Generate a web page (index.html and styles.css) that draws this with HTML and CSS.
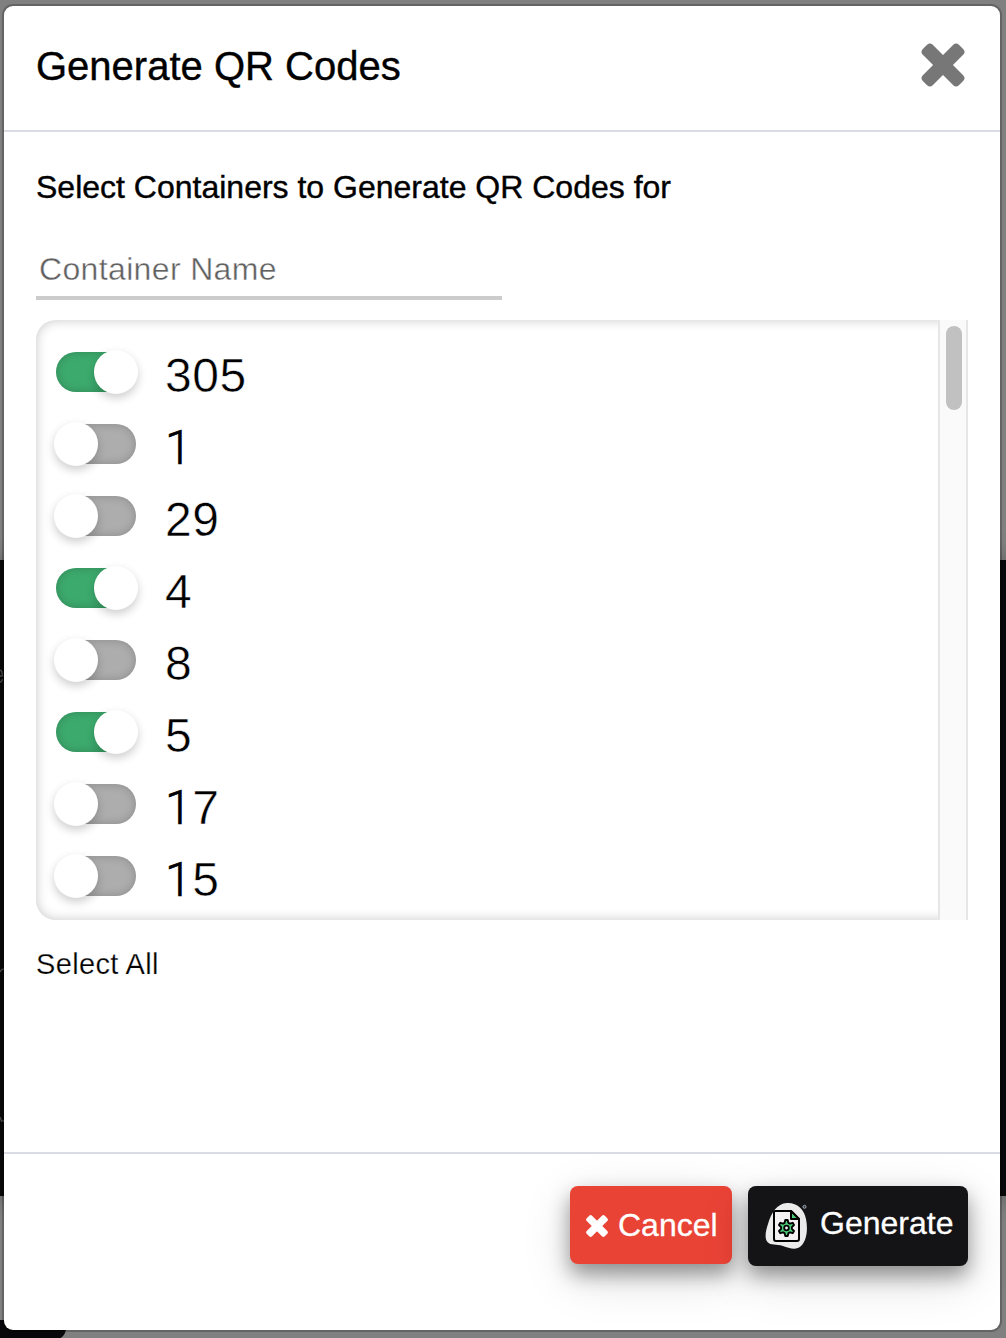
FILE: index.html
```
<!DOCTYPE html>
<html lang="en">
<head>
<meta charset="utf-8">
<title>Generate QR Codes</title>
<link rel="stylesheet" href="styles.css">
</head>
<body>
<div class="backdrop" aria-hidden="true">
  <div class="card">
    <svg class="frags" viewBox="0 0 4 636"><path d="M0 110Q2.500 111 2.500 116H0M0 122Q2 122 2.500 119M0 412Q1 409 4 409M0 557 1.500 561H4" fill="none" stroke="#444" stroke-width="1.500"/></svg>
  </div>
  <div class="tab"></div>
</div>
<main class="modal">
  <header class="modal-header">
    <h1>Generate QR Codes</h1>
    <svg class="close" viewBox="0 0 44 44"><g transform="rotate(45 22 22)"><rect x="-3.500" y="15" width="51" height="14" rx="4"/><rect x="15" y="-3.500" width="14" height="51" rx="4"/></g></svg>
  </header>
  <section class="modal-body">
    <h2>Select Containers to Generate QR Codes for</h2>
    <input class="search" type="text" placeholder="Container Name">
    <div class="list">
      <div class="rows">
        <label class="row"><span class="switch on"></span><span class="num">305</span></label>
        <label class="row"><span class="switch"></span><span class="num"><span class="one">1</span></span></label>
        <label class="row"><span class="switch"></span><span class="num">29</span></label>
        <label class="row"><span class="switch on"></span><span class="num">4</span></label>
        <label class="row"><span class="switch"></span><span class="num">8</span></label>
        <label class="row"><span class="switch on"></span><span class="num">5</span></label>
        <label class="row"><span class="switch"></span><span class="num"><span class="one">1</span>7</span></label>
        <label class="row"><span class="switch"></span><span class="num"><span class="one">1</span>5</span></label>
      </div>
      <div class="scrollbar"><div class="thumb"></div></div>
    </div>
    <div class="select-all">Select All</div>
  </section>
  <footer class="modal-footer">
    <button class="btn cancel"><svg class="x" viewBox="0 0 44 44"><g transform="rotate(45 22 22)"><rect x="-3.500" y="14.500" width="51" height="15" rx="4"/><rect x="14.500" y="-3.500" width="15" height="51" rx="4"/></g></svg><span>Cancel</span></button>
    <button class="btn generate">
      <svg class="doc" viewBox="0 0 44 48">
        <path d="M22 1C32 .5 39 7 41 17C43 27 42 38 36 44C31 49 24 46 18 44C11 41.500 6 44 2.500 40C-1 36 1 28 3 22C6 11 12 1.500 22 1Z" fill="#ebebeb"/>
        <circle cx="39.500" cy="4.800" r="1.500" fill="#333" stroke="#a4afc1"/>
        <path d="M10 9H26L34 17V37Q34 39 32 39H11Q9 39 9 37V10Q9 9 10 9Z" fill="#f3f1f1" stroke="#000" stroke-width="2" stroke-linejoin="round"/>
        <path d="M26 9V17H34Z" fill="#4fcc7a" stroke="#000" stroke-width="2" stroke-linejoin="round"/>
        <path d="M19.600 20.800 20.300 18H22.700L23.400 20.800 25 21.700 27.700 20.800 29 23 26.900 25.100V26.900L29 29 27.700 31.200 25 30.300 23.400 31.200 22.700 34H20.300L19.600 31.200 18 30.300 15.300 31.200 14 29 16.100 26.900V25.100L14 23 15.300 20.800 18 21.700Z" fill="#4fcc7a" stroke="#000" stroke-width="1.900" stroke-linejoin="round"/>
        <circle cx="21.500" cy="26" r="2.300" fill="#f3f1f1" stroke="#000" stroke-width="1.800"/>
      </svg>
      <span>Generate</span>
    </button>
  </footer>
</main>
</body>
</html>
```
FILE: styles.css
```
* { box-sizing: border-box; }
body {
  margin: 0;
  height: 1338px;
  padding: 6px 6px 8px 4px;
  position: relative;
  overflow: hidden;
  background: #808080;
  font-family: "Liberation Sans", Arial, sans-serif;
  color: #000;
}
.backdrop { position: absolute; inset: 0; overflow: hidden; }
.card {
  position: absolute;
  top: 560px;
  left: 0;
  right: 0;
  height: 636px;
  background: #08080a;
  box-shadow: 0 0 24px rgba(0, 0, 0, .45);
}
.frags { display: block; width: 4px; height: 636px; }
.tab {
  position: absolute;
  left: 0;
  top: 1320px;
  width: 66px;
  height: 20px;
  border-radius: 0 0 12px 0;
  background: #08080a;
}
.modal {
  position: relative;
  height: 1324px;
  display: flex;
  flex-direction: column;
  background: #fff;
  border-radius: 9px;
  box-shadow: 0 0 0 2px rgba(0, 0, 0, .22);
}
.modal-header {
  height: 126px;
  flex: none;
  display: flex;
  justify-content: space-between;
  align-items: flex-start;
  padding: 37px 35px 0 32px;
  border-bottom: 2px solid #d9dde3;
}
h1, h2 { margin: 0; font-weight: 400; -webkit-text-stroke: .4px #000; }
h1 { font-size: 40px; line-height: 46px; }
h2 { font-size: 32px; line-height: 36px; }
.close { width: 44px; height: 44px; fill: #777; }
.modal-body { flex: 1; padding: 37px 32px 0; }
.search {
  display: block;
  width: 466px;
  height: 60px;
  margin-top: 35px;
  padding: 3px 3px 0;
  border: 0;
  border-bottom: 4px solid #ccc;
  outline: 0;
  background: transparent;
  font: 32px "Liberation Sans", Arial, sans-serif;
  letter-spacing: .35px;
}
.search::placeholder { color: #616161; -webkit-text-stroke: .4px #fff; }
.list {
  display: flex;
  justify-content: space-between;
  height: 600px;
  margin-top: 20px;
  border-radius: 20px 0 0 20px;
  box-shadow: inset 0 0 12px rgba(0, 0, 0, .22);
}
.rows { padding: 16px 0 0 20px; }
.row { display: flex; height: 72px; gap: 29px; align-items: center; }
.switch {
  position: relative;
  width: 80px;
  height: 40px;
  border-radius: 20px;
  background: #adadad;
  box-shadow: inset 0 0 10px rgba(0, 0, 0, .2);
}
.switch.on { background: #3daa6d; }
.switch::after {
  content: "";
  position: absolute;
  left: -2px;
  top: -2px;
  width: 44px;
  height: 44px;
  border-radius: 50%;
  background: #fff;
  box-shadow: 0 4px 10px rgba(0, 0, 0, .2);
}
.switch.on::after { left: 38px; }
.num { font-size: 48px; line-height: 56px; padding-top: 8px; letter-spacing: .6px; -webkit-text-stroke: .5px #fff; }
.one { font-family: Roboto, "Liberation Sans", sans-serif; font-weight: 300; -webkit-text-stroke: .7px #000; }
.scrollbar {
  width: 30px;
  padding: 6px 0 0 6px;
  background: #fafafa;
  border: solid #e6e6e6;
  border-width: 0 2px;
}
.thumb { width: 16px; height: 84px; border-radius: 8px; background: #c1c1c1; }
.select-all { margin-top: 27px; font-size: 29px; line-height: 34px; letter-spacing: .35px; -webkit-text-stroke: .25px #fff; }
.modal-footer {
  height: 178px;
  flex: none;
  display: flex;
  justify-content: flex-end;
  align-items: flex-start;
  gap: 16px;
  padding: 32px 32px 0;
  border-top: 2px solid #d9dde3;
}
.btn {
  display: flex;
  align-items: center;
  border: 0;
  border-radius: 8px;
  color: #fff;
  font: 32px/36px "Liberation Sans", Arial, sans-serif;
  -webkit-text-stroke: .3px #fff;
  box-shadow: 0 10px 20px rgba(0, 0, 0, .38), 0 14px 50px rgba(0, 0, 0, .14);
}
.cancel { width: 162px; height: 78px; padding: 0 0 0 16px; gap: 10px; background: #e94336; }
.x { width: 22px; height: 22px; margin-top: 2px; fill: #fff; }
.generate { width: 220px; height: 80px; padding: 0 0 0 17px; gap: 11px; background: #141416; }
.generate span { margin-top: -7px; }
.doc { width: 44px; height: 48px; }
```
